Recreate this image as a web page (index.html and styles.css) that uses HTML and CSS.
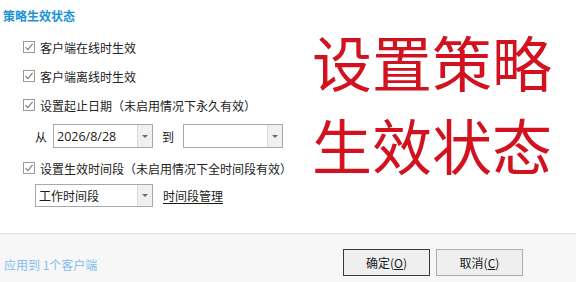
FILE: index.html
```html
<!DOCTYPE html>
<html lang="zh-CN">
<head>
<meta charset="utf-8">
<title>策略生效状态</title>
<link rel="stylesheet" href="styles.css">
</head>
<body>
<div class="dialog">
  <div class="main">
    <div class="form">
      <div class="title">策略生效状态</div>
      <div class="rows">
        <label class="check-row">
          <span class="box"><svg viewBox="0 0 10 10" width="10" height="10"><polyline points="1.5,5.2 3.8,7.6 8.6,1.8" fill="none" stroke="#7a7a7a" stroke-width="1.1"/></svg></span>
          <span>客户端在线时生效</span>
        </label>
        <label class="check-row">
          <span class="box"><svg viewBox="0 0 10 10" width="10" height="10"><polyline points="1.5,5.2 3.8,7.6 8.6,1.8" fill="none" stroke="#7a7a7a" stroke-width="1.1"/></svg></span>
          <span>客户端离线时生效</span>
        </label>
        <label class="check-row">
          <span class="box"><svg viewBox="0 0 10 10" width="10" height="10"><polyline points="1.5,5.2 3.8,7.6 8.6,1.8" fill="none" stroke="#7a7a7a" stroke-width="1.1"/></svg></span>
          <span>设置起止日期（未启用情况下永久有效）</span>
        </label>
        <div class="date-row">
          <span class="lbl-from">从</span>
          <div class="combo w100">
            <span class="combo-text num">2026/8/28</span>
            <span class="combo-btn"><span class="arrow"></span></span>
          </div>
          <span class="lbl-to">到</span>
          <div class="combo w100">
            <span class="combo-text"></span>
            <span class="combo-btn"><span class="arrow"></span></span>
          </div>
        </div>
        <label class="check-row row4">
          <span class="box"><svg viewBox="0 0 10 10" width="10" height="10"><polyline points="1.5,5.2 3.8,7.6 8.6,1.8" fill="none" stroke="#7a7a7a" stroke-width="1.1"/></svg></span>
          <span>设置生效时间段（未启用情况下全时间段有效）</span>
        </label>
        <div class="period-row">
          <div class="combo w118 h23">
            <span class="combo-text">工作时间段</span>
            <span class="combo-btn"><span class="arrow"></span></span>
          </div>
          <a class="link">时间段管理</a>
        </div>
      </div>
    </div>
    <div class="note">设置策略<br>生效状态</div>
  </div>
  <div class="footer">
    <span class="apply">应用到 1个客户端</span>
    <div class="buttons">
      <button class="btn primary">确定(<u>O</u>)</button>
      <button class="btn">取消(<u>C</u>)</button>
    </div>
  </div>
</div>
</body>
</html>
```

FILE: styles.css
```css
* { box-sizing: border-box; }
html, body {
  margin: 0;
  padding: 0;
  background: #ffffff;
}
body {
  font-family: "Noto Sans CJK SC", "Noto Sans", sans-serif;
  font-size: 12px;
  color: #1a1a1a;
}
.dialog {
  width: 576px;
  height: 282px;
  display: flex;
  flex-direction: column;
}
.main {
  height: 234px;
  display: flex;
  border-bottom: 1px solid #dcdcdc;
}
.form {
  width: 312px;
  padding: 8px 0 0 3px;
}
.title {
  font-size: 12px;
  font-weight: 700;
  color: #1b93d6;
  line-height: 16px;
  height: 16px;
}
.rows {
  padding-left: 20px;
  margin-top: 13px;
  display: flex;
  flex-direction: column;
}
.check-row {
  display: flex;
  align-items: center;
  height: 20px;
  gap: 5px;
  margin-bottom: 9px;
  white-space: nowrap;
  color: #222;
}
.box {
  width: 12px;
  height: 12px;
  border: 1px solid #9a9a9a;
  background: #fff;
  display: flex;
  align-items: center;
  justify-content: center;
}
.box svg { display: block; }
.date-row {
  display: flex;
  align-items: center;
  height: 24px;
  margin-bottom: 10px;
}
.lbl-from {
  margin-left: 12px;
  width: 18px;
}
.lbl-to {
  margin-left: 9px;
  width: 21px;
}
.combo {
  display: flex;
  height: 24px;
  border: 1px solid #a8a8a8;
  background: #fff;
}
.w100 { width: 100px; }
.w118 { width: 118px; }
.h23 { height: 23px; }
.combo-text {
  flex: 1;
  padding-left: 3px;
  display: flex;
  align-items: center;
  color: #1a1a1a;
}
.num {
  font-family: "Open Sans", "Noto Sans", sans-serif;
  font-size: 12.5px;
}
.combo-btn {
  width: 15px;
  background: #f0f0f0;
  border-left: 1px solid #dadada;
  display: flex;
  align-items: center;
  justify-content: center;
}
.arrow {
  width: 0;
  height: 0;
  border-left: 3px solid transparent;
  border-right: 3px solid transparent;
  border-top: 3px solid #6a6a6a;
}
.row4 { margin-bottom: 6px; }
.period-row {
  display: flex;
  align-items: center;
  padding-left: 12px;
  gap: 10px;
}
.link {
  color: #1a1a1a;
  text-decoration: underline;
  text-underline-offset: 2px;
}
.note {
  padding-top: 19px;
  font-size: 60px;
  line-height: 83px;
  color: #d2121f;
  white-space: nowrap;
  letter-spacing: 0;
}
.footer {
  flex: 1;
  background: #f7f7f7;
  display: flex;
  align-items: center;
  padding: 3px 53px 0 4px;
}
.apply {
  color: #7fbcf0;
  font-size: 12px;
  margin-top: 9px;
}
.buttons {
  margin-left: auto;
  display: flex;
  gap: 6px;
  margin-top: 5px;
}
.btn {
  width: 87px;
  height: 27px;
  background: #efefef;
  border: 1px solid #adadad;
  font-family: "Noto Sans CJK SC", "Noto Sans", sans-serif;
  font-size: 12px;
  color: #1a1a1a;
  padding: 0;
}
.btn u { text-underline-offset: 1px; }
.primary { border-color: #3a3a3a; }
```
